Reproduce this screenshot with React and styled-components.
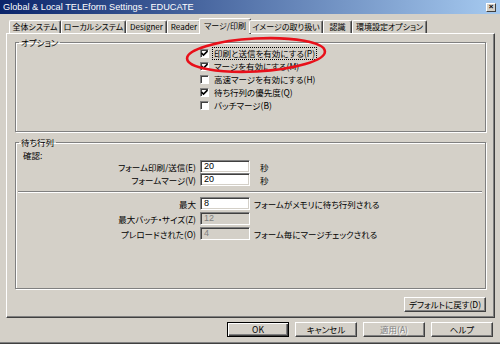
import React from 'react';
import styled, { createGlobalStyle } from 'styled-components';

const Global = createGlobalStyle`
  html, body { margin: 0; padding: 0; background: #d4d0c8; }
  body {
    font-family: "Noto Sans CJK JP", "Noto Sans", sans-serif;
    font-size: 8.5px;
    color: #000;
    font-feature-settings: "palt";
  }
  * { box-sizing: border-box; }
`;

const Window = styled.div`
  position: relative;
  width: 500px;
  height: 344px;
  background: #d4d0c8;
  display: flex;
  flex-direction: column;
  border-bottom: 1px solid #404040;
  box-shadow: inset 0 -1px 0 #808080;
  overflow: hidden;
`;

const TitleBar = styled.div`
  flex: none;
  height: 14px;
  background: linear-gradient(to right, #0a246a, #a6caf0);
  display: flex;
  align-items: center;
  justify-content: space-between;
  padding: 0 4px 0 3px;
  font-family: "Liberation Sans", Arial, sans-serif;
  font-size: 9.2px;
  color: #fff;
  font-feature-settings: normal;
`;

const CloseBtn = styled.div`
  width: 10px;
  height: 9px;
  background: #d4d0c8;
  border: 1px solid;
  border-color: #fff #404040 #404040 #fff;
  display: flex;
  align-items: center;
  justify-content: center;
  color: #000;
  font-family: "Liberation Sans", Arial, sans-serif;
  font-size: 8px;
  font-weight: bold;
  line-height: 1;
`;

const TabStrip = styled.div`
  flex: none;
  height: 19px;
  display: flex;
  align-items: flex-end;
  padding-left: 9px;
  position: relative;
  z-index: 1;
  font-size: 8px;
`;

const Tab = styled.div`
  flex: none;
  width: ${p => (p.$active ? p.$w + 4 : p.$w)}px;
  height: ${p => (p.$active ? 16 : 13)}px;
  margin: 0 ${p => (p.$active ? -2 : 0)}px ${p => (p.$active ? -1 : 0)}px;
  background: #d4d0c8;
  border-top: 1px solid #fff;
  border-left: 1px solid #fff;
  border-right: 1px solid #404040;
  box-shadow: inset -1px 0 0 #808080;
  border-radius: 2px 2px 0 0;
  display: flex;
  align-items: center;
  justify-content: center;
  white-space: nowrap;
  line-height: 1;
  padding-bottom: ${p => (p.$active ? 2 : 0)}px;
`;

const Panel = styled.div`
  flex: none;
  height: 285px;
  margin: 0 5px 0 6px;
  border-top: 1px solid #fff;
  border-left: 1px solid #fff;
  border-right: 1px solid #404040;
  border-bottom: 1px solid #404040;
  box-shadow: inset -1px -1px 0 #808080;
  padding: 3px 8px 0 8px;
  display: flex;
  flex-direction: column;
`;

const Group = styled.fieldset`
  margin: 0;
  padding: 0;
  border: 1px solid #808080;
  box-shadow: inset 1px 1px 0 #fff, 1px 1px 0 #fff;
  height: ${p => p.$h}px;
  margin-top: ${p => p.$mt || 0}px;
  min-inline-size: 0;
`;

const Legend = styled.legend`
  margin-left: 3px;
  padding: 0 2px;
  line-height: 10px;
  height: 10px;
`;

const CheckList = styled.div`
  display: flex;
  flex-direction: column;
  padding-left: 184px;
`;

const CheckRow = styled.label`
  height: 13px;
  display: flex;
  align-items: center;
  gap: 4px;
`;

const Box = styled.span`
  width: 9px;
  height: 9px;
  flex: none;
  background: #fff;
  border: 1px solid;
  border-color: #808080 #fff #fff #808080;
  box-shadow: inset 1px 1px 0 #404040;
  display: flex;
  align-items: center;
  justify-content: center;
`;

const CheckText = styled.span`
  line-height: 11px;
  padding: 0 1px;
  outline: ${p => (p.$focus ? '1px dotted #000' : 'none')};
  white-space: nowrap;
`;

const SubHead = styled.div`
  height: 10px;
  line-height: 10px;
  margin: 3px 0 0 7px;
`;

const FormRows = styled.div`
  display: flex;
  flex-direction: column;
  gap: ${p => p.$gap}px;
`;

const FormRow = styled.div`
  display: grid;
  grid-template-columns: 180px 50px auto;
  column-gap: 4px;
  align-items: center;
  height: 13px;
`;

const FieldLabel = styled.span`
  text-align: right;
  white-space: nowrap;
`;

const Input = styled.div`
  height: 13px;
  border: 1px solid;
  border-color: #808080 #fff #fff #808080;
  box-shadow: inset 1px 1px 0 #404040, inset -1px -1px 0 #d4d0c8;
  background: ${p => (p.$disabled ? '#d4d0c8' : '#fff')};
  color: ${p => (p.$disabled ? '#808080' : '#000')};
  padding-left: 3px;
  line-height: 11px;
  font-family: "Liberation Sans", Arial, sans-serif;
  font-size: 9px;
`;

const After = styled.span`
  margin-left: ${p => p.$ml}px;
  white-space: nowrap;
`;

const Separator = styled.div`
  height: 2px;
  margin: 5px 3px 4px 2px;
  border-top: 1px solid #808080;
  border-bottom: 1px solid #fff;
`;

const DefaultRow = styled.div`
  display: flex;
  justify-content: flex-end;
  margin-top: 8px;
`;

const Button = styled.div`
  width: ${p => p.$w}px;
  height: 15px;
  display: flex;
  align-items: center;
  justify-content: center;
  background: #d4d0c8;
  border: 1px solid;
  border-color: ${p => (p.$default ? '#000' : '#fff #404040 #404040 #fff')};
  box-shadow: ${p =>
    p.$default
      ? 'inset 1px 1px 0 #fff, inset -1px -1px 0 #404040, inset -2px -2px 0 #808080'
      : 'inset -1px -1px 0 #808080'};
  color: ${p => (p.$disabled ? '#808080' : '#000')};
  text-shadow: ${p => (p.$disabled ? '1px 1px 0 #fff' : 'none')};
  white-space: nowrap;
  line-height: 1;
`;

const ButtonBar = styled.div`
  flex: none;
  display: flex;
  justify-content: flex-end;
  gap: 6px;
  padding: 4px 7px 0 0;
`;

const Annotation = styled.svg`
  position: absolute;
  left: 184px;
  top: 36px;
  pointer-events: none;
  z-index: 5;
`;

const Check = () => (
  <svg width="7" height="7" viewBox="0 0 7 7">
    <path d="M0.5 3 L2.5 5 L6.5 1" stroke="#000" strokeWidth="1.6" fill="none" />
  </svg>
);

const checks = [
  { t: '印刷と送信を有効にする(P)', c: true, f: true },
  { t: 'マージを有効にする(M)', c: true },
  { t: '高速マージを有効にする(H)', c: false },
  { t: '待ち行列の優先度(Q)', c: true },
  { t: 'バッチマージ(B)', c: false },
];

const tabs = [
  { t: '全体システム', w: 52 },
  { t: 'ローカルシステム', w: 65 },
  { t: 'Designer', w: 41 },
  { t: 'Reader', w: 34 },
  { t: 'マージ/印刷', w: 48, a: true },
  { t: 'イメージの取り扱い', w: 74 },
  { t: '認識', w: 29 },
  { t: '環境設定オプション', w: 75 },
];

export default function App() {
  return (
    <>
      <Global />
      <Window>
        <TitleBar>
          <span>Global &amp; Local TELEform Settings - EDUCATE</span>
          <CloseBtn>×</CloseBtn>
        </TitleBar>
        <TabStrip>
          {tabs.map(tab => (
            <Tab key={tab.t} $w={tab.w} $active={tab.a}>{tab.t}</Tab>
          ))}
        </TabStrip>
        <Panel>
          <Group $h={95}>
            <Legend>オプション</Legend>
            <CheckList>
              {checks.map(c => (
                <CheckRow key={c.t}>
                  <Box>{c.c && <Check />}</Box>
                  <CheckText $focus={c.f}>{c.t}</CheckText>
                </CheckRow>
              ))}
            </CheckList>
          </Group>
          <Group $h={152} $mt={5}>
            <Legend>待ち行列</Legend>
            <SubHead>確認:</SubHead>
            <FormRows $gap={0}>
              <FormRow>
                <FieldLabel>フォーム印刷/送信(E)</FieldLabel>
                <Input>20</Input>
                <After $ml={6}>秒</After>
              </FormRow>
              <FormRow>
                <FieldLabel>フォームマージ(V)</FieldLabel>
                <Input>20</Input>
                <After $ml={6}>秒</After>
              </FormRow>
            </FormRows>
            <Separator />
            <FormRows $gap={2}>
              <FormRow>
                <FieldLabel>最大</FieldLabel>
                <Input>8</Input>
                <After $ml={0}>フォームがメモリに待ち行列される</After>
              </FormRow>
              <FormRow>
                <FieldLabel>最大バッチ・サイズ(Z)</FieldLabel>
                <Input $disabled>12</Input>
                <span />
              </FormRow>
              <FormRow>
                <FieldLabel>プレロードされた(O)</FieldLabel>
                <Input $disabled>4</Input>
                <After $ml={0}>フォーム毎にマージチェックされる</After>
              </FormRow>
            </FormRows>
          </Group>
          <DefaultRow>
            <Button $w={82}>デフォルトに戻す(D)</Button>
          </DefaultRow>
        </Panel>
        <ButtonBar>
          <Button $w={62} $default>OK</Button>
          <Button $w={62}>キャンセル</Button>
          <Button $w={62} $disabled>適用(A)</Button>
          <Button $w={62}>ヘルプ</Button>
        </ButtonBar>
        <Annotation width="146" height="40" viewBox="0 0 146 40">
          <ellipse cx="72" cy="19" rx="69" ry="16.5" transform="rotate(-3 72 19)"
            fill="none" stroke="#e8101a" strokeWidth="2.6" />
        </Annotation>
      </Window>
    </>
  );
}
